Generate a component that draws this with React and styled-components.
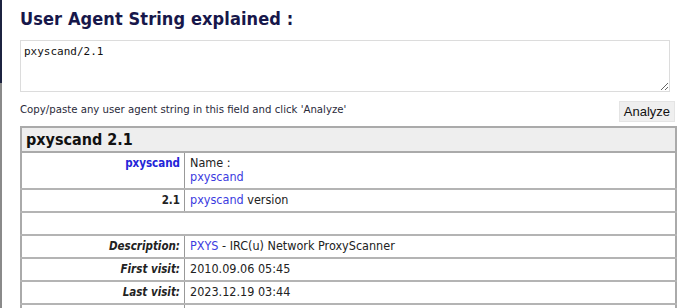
import React from "react";
import styled, { createGlobalStyle } from "styled-components";

const Global = createGlobalStyle`
  html, body { margin: 0; padding: 0; background: #fff; }
  body { font-family: "DejaVu Sans Condensed", "DejaVu Sans", Verdana, sans-serif; color: #222; }
`;

const Page = styled.div`
  display: flex;
  min-height: 308px;
`;

const Edge = styled.div`
  width: 2px;
  flex: none;
  display: flex;
  flex-direction: column;
`;

const EdgePart = styled.div`
  background: ${(p) => p.$color};
  height: ${(p) => (p.$h ? `${p.$h}px` : "auto")};
  flex: ${(p) => (p.$h ? "none" : "1")};
`;

const Main = styled.div`
  flex: 1;
  padding: 7px 15px 0 18px;
`;

const Title = styled.h1`
  margin: 0 0 9px;
  font-size: 18px;
  letter-spacing: 0.1px;
  font-weight: bold;
  color: #17174a;
  line-height: 24px;
`;

const Input = styled.textarea`
  display: block;
  box-sizing: border-box;
  width: 650px;
  height: 52px;
  border: 1px solid #dcdcdc;
  padding: 4px 3px;
  font-family: "DejaVu Sans Mono", monospace;
  font-size: 11px;
  color: #111;
  resize: vertical;
  margin: 0;
`;

const HintRow = styled.div`
  display: flex;
  justify-content: space-between;
  align-items: flex-start;
  width: 657px;
  margin-top: 9px;
`;

const Hint = styled.span`
  font-size: 11.3px;
  color: #2a2a3a;
  line-height: 14px;
  margin-top: 2px;
`;

const Button = styled.button`
  margin-right: 2px;
  background: #efefef;
  border: 1px solid #e4e4e4;
  font-family: "Liberation Sans", Arial, sans-serif;
  font-size: 13px;
  color: #111;
  padding: 1px 4px;
  height: 21px;
`;

const Table = styled.table`
  margin-top: 4px;
  width: 657px;
  border-collapse: collapse;
  border: 2px solid #aaa;
`;

const HeadCell = styled.th`
  background: #eeeeee;
  text-align: left;
  font-size: 16px;
  font-weight: bold;
  color: #111;
  padding: 1px 4px;
  line-height: 21px;
  border-bottom: 2px solid #aaa;
`;

const Row = styled.tr`
  border-bottom: 2px solid #b4b4b4;
`;

const Key = styled.td`
  width: 154px;
  text-align: right;
  padding: 3px 4px 4px;
  border-right: ${(p) => (p.$full ? "none" : "1px solid #999")};
  font-size: 11.5px;
  font-weight: bold;
  font-style: ${(p) => (p.$italic ? "italic" : "normal")};
  color: ${(p) => (p.$link ? "#2424d8" : "#222")};
  vertical-align: top;
  line-height: 14px;
`;

const Val = styled.td`
  padding: 3px 5px 4px;
  font-size: 12.5px;
  color: #222;
  vertical-align: top;
  line-height: 14px;
`;

const Link = styled.span`
  color: #3b3be0;
`;

export default function App() {
  return (
    <>
      <Global />
      <Page>
        <Edge>
          <EdgePart $color="#1c2340" $h={83} />
          <EdgePart $color="#8a8a8a" />
        </Edge>
        <Main>
          <Title>User Agent String explained :</Title>
          <Input defaultValue="pxyscand/2.1" />
          <HintRow>
            <Hint>Copy/paste any user agent string in this field and click 'Analyze'</Hint>
            <Button>Analyze</Button>
          </HintRow>
          <Table>
            <thead>
              <tr>
                <HeadCell colSpan={2}>pxyscand 2.1</HeadCell>
              </tr>
            </thead>
            <tbody>
              <Row>
                <Key $link>pxyscand</Key>
                <Val>
                  Name :<br />
                  <Link>pxyscand</Link>
                </Val>
              </Row>
              <Row>
                <Key>2.1</Key>
                <Val>
                  <Link>pxyscand</Link> version
                </Val>
              </Row>
              <Row>
                <Key $full colSpan={2}>&nbsp;</Key>
              </Row>
              <Row>
                <Key $italic>Description:</Key>
                <Val>
                  <Link>PXYS</Link> - IRC(u) Network ProxyScanner
                </Val>
              </Row>
              <Row>
                <Key $italic>First visit:</Key>
                <Val>2010.09.06 05:45</Val>
              </Row>
              <Row>
                <Key $italic>Last visit:</Key>
                <Val>2023.12.19 03:44</Val>
              </Row>
              <Row>
                <Key>&nbsp;</Key>
                <Val>&nbsp;</Val>
              </Row>
            </tbody>
          </Table>
        </Main>
      </Page>
    </>
  );
}
